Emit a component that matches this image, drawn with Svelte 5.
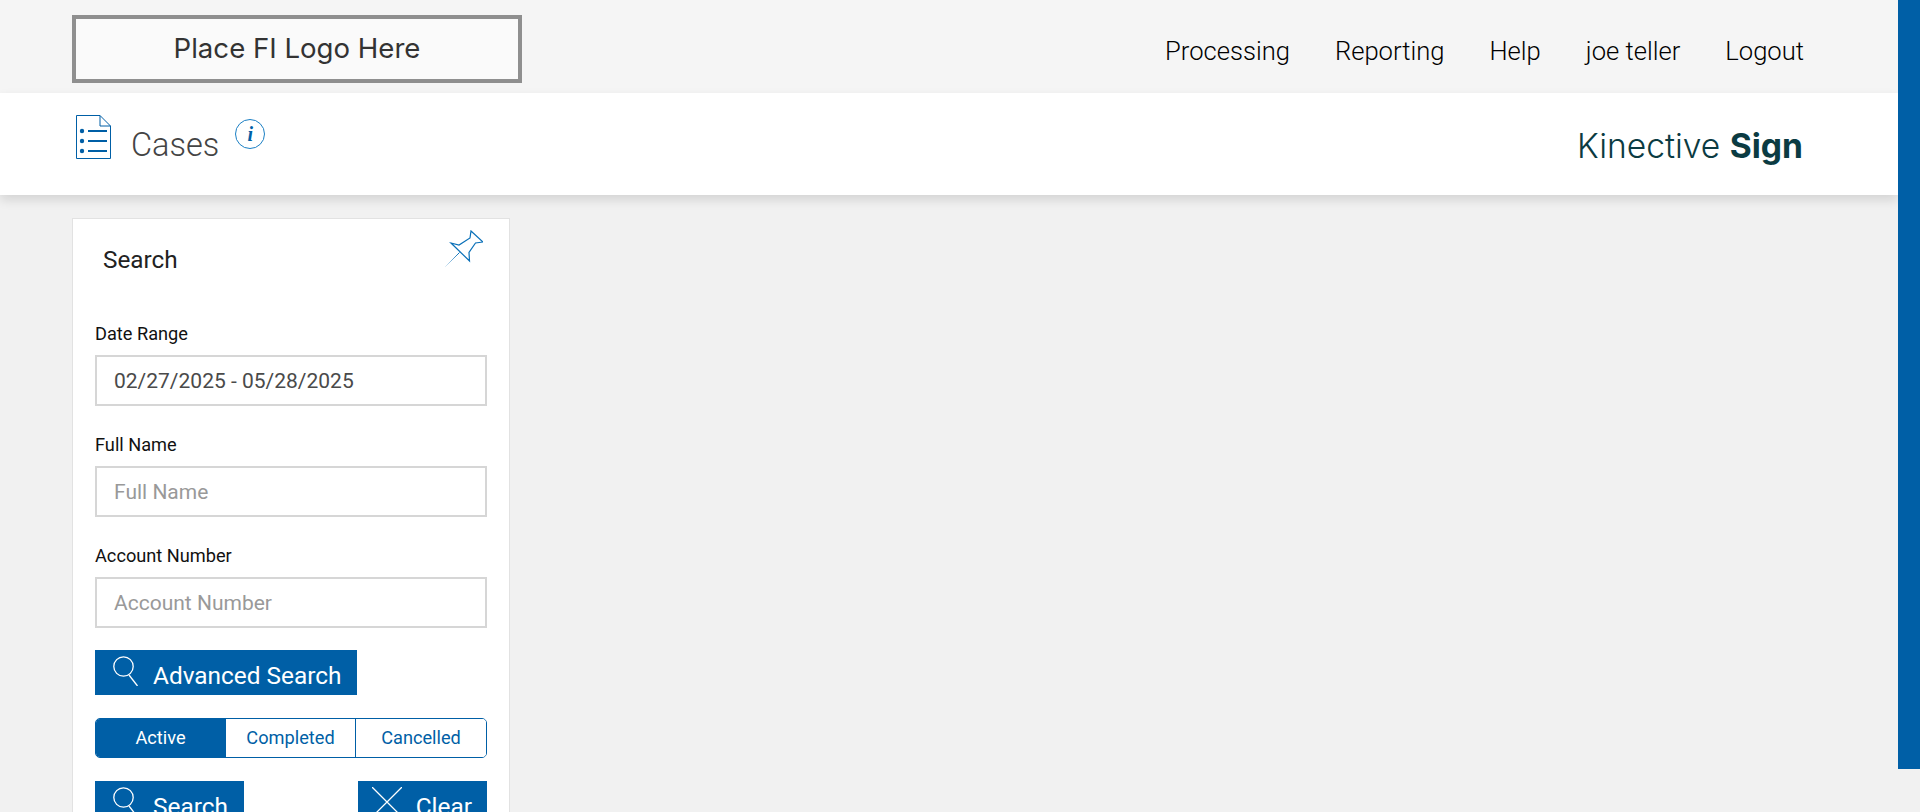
<script>
  // toggle state for the case status filter
  let status = $state('Active');
  const statuses = ['Active', 'Completed', 'Cancelled'];
  const navLinks = ['Processing', 'Reporting', 'Help', 'joe teller', 'Logout'];

  let dateRange = $state('02/27/2025 - 05/28/2025');
  let fullName = $state('');
  let accountNumber = $state('');
</script>

<div class="page">
  <div class="main">
    <header class="topbar">
      <div class="logo">Place FI Logo Here</div>
      <nav class="nav">
        {#each navLinks as link}
          <a href="#top">{link}</a>
        {/each}
      </nav>
    </header>

    <div class="titlebar">
      <div class="title">
        <svg class="doc-icon" viewBox="0 0 35 44" width="35" height="44" fill="none">
          <path d="M.5.5H24L34.5 11V43.5H.5Z" stroke="#005fa6" />
          <path d="M24 .5V11H34.5" stroke="#005fa6" />
          <g fill="#005fa6">
            <circle cx="6" cy="16" r="2.2" />
            <circle cx="6" cy="26" r="2.2" />
            <circle cx="6" cy="36" r="2.2" />
            <rect x="12" y="15" width="19" height="2" />
            <rect x="12" y="25" width="19" height="2" />
            <rect x="12" y="35" width="19" height="2" />
          </g>
        </svg>
        <h1>Cases</h1>
        <button class="info" aria-label="Info">i</button>
      </div>
      <div class="brand">Kinective <b>Sign</b></div>
    </div>

    <div class="content">
      <section class="card">
        <div class="card-head">
          <h2>Search</h2>
          <svg class="pin" viewBox="0 0 38 38" width="38" height="38" fill="none">
            <defs>
              <linearGradient id="needle" x1="14" y1="23" x2="0" y2="37" gradientUnits="userSpaceOnUse">
                <stop offset="0" stop-color="#0a70b8" />
                <stop offset="1" stop-color="#0a70b8" stop-opacity="0.1" />
              </linearGradient>
            </defs>
            <path d="M26 1L38 12 30.5 13 24 22.5 24.5 31 6 13 14 15 25 8Z" stroke="#0a70b8" stroke-width="1.2" />
            <path d="M14.5 22.5L0 37" stroke="url(#needle)" />
          </svg>
        </div>

        <div class="fields">
          <div>
            <label for="range">Date Range</label>
            <input id="range" type="text" bind:value={dateRange} />
          </div>
          <div>
            <label for="name">Full Name</label>
            <input id="name" type="text" placeholder="Full Name" bind:value={fullName} />
          </div>
          <div>
            <label for="account">Account Number</label>
            <input id="account" type="text" placeholder="Account Number" bind:value={accountNumber} />
          </div>
        </div>

        <button class="btn advanced">
          <svg viewBox="0 0 27 30" width="27" height="30" fill="none" stroke="#fff" stroke-width="1.3">
            <circle cx="10.5" cy="10.5" r="9.7" />
            <path d="M16 19L24.5 30" />
          </svg>
          Advanced Search
        </button>

        <div class="toggle">
          {#each statuses as s}
            <button class:on={status === s} onclick={() => (status = s)}>{s}</button>
          {/each}
        </div>

        <div class="actions">
          <button class="btn">
            <svg viewBox="0 0 27 30" width="27" height="30" fill="none" stroke="#fff" stroke-width="1.3">
              <circle cx="10.5" cy="10.5" r="9.7" />
              <path d="M16 19L24.5 30" />
            </svg>
            Search
          </button>
          <button class="btn clear">
            <svg viewBox="0 0 30 30" width="30" height="30" fill="none" stroke="#fff" stroke-width="1.3">
              <path d="M0 0L30 30M30 0L0 30" />
            </svg>
            Clear
          </button>
        </div>
      </section>
    </div>
  </div>
  <div class="rail"></div>
</div>

<style>
  :global(body) {
    background: #f1f1f1;
    overflow: hidden;
  }
  .page {
    display: flex;
    align-items: flex-start;
    height: 812px;
    overflow: hidden;
    font-family: Roboto, "Liberation Sans", sans-serif;
  }
  .main {
    flex: 1;
    min-width: 0;
  }
  .rail {
    width: 22px;
    height: 769px;
    flex: none;
    background: #005fa6;
    position: relative;
    z-index: 2;
  }

  .topbar {
    height: 93px;
    box-sizing: border-box;
    padding: 15px 94px 0 72px;
    background: #f5f5f5;
    display: flex;
    justify-content: space-between;
    align-items: flex-start;
  }
  .logo {
    width: 450px;
    height: 68px;
    box-sizing: border-box;
    padding-bottom: 3px;
    border: 4px solid #8f8f8f;
    background: #fafafa;
    color: #333;
    font-family: Inter, sans-serif;
    font-size: 27.6px;
    display: flex;
    align-items: center;
    justify-content: center;
  }
  .nav {
    display: flex;
    gap: 45px;
    padding-top: 20px;
  }
  .nav a {
    color: #000;
    font-weight: 300;
    font-size: 25.6px;
    line-height: 32px;
    text-decoration: none;
  }

  .titlebar {
    height: 102px;
    box-sizing: border-box;
    padding: 22px 95px 0 76px;
    background: #fff;
    box-shadow: 0 5px 10px rgba(0, 0, 0, 0.12);
    display: flex;
    justify-content: space-between;
    align-items: flex-start;
    position: relative;
  }
  .title {
    display: flex;
    align-items: flex-start;
  }
  .doc-icon {
    display: block;
  }
  h1 {
    margin: 10px 0 0 20px;
    font-size: 32.5px;
    line-height: 40px;
    font-weight: 300;
    color: #444;
  }
  .info {
    width: 30px;
    height: 30px;
    margin: 4px 0 0 16px;
    padding: 0;
    border: 1px solid #1b7fc4;
    border-radius: 50%;
    background: #fff;
    color: #005fa6;
    font: italic bold 20px "Liberation Serif", serif;
  }
  .brand {
    margin-top: 9px;
    font-family: Inter, sans-serif;
    font-weight: 300;
    font-size: 33.6px;
    line-height: 44px;
    color: #0b3b42;
  }
  .brand b {
    font-weight: 700;
  }

  .content {
    padding: 23px 0 0 72px;
  }
  .card {
    width: 438px;
    height: 700px;
    box-sizing: border-box;
    padding: 0 22px;
    background: #fff;
    border: 1px solid #e2e2e2;
  }
  .card-head {
    height: 104px;
    display: flex;
    justify-content: space-between;
    align-items: flex-start;
  }
  h2 {
    margin: 25px 0 0 8px;
    font-size: 24.3px;
    line-height: 32px;
    font-weight: 400;
    color: #222;
  }
  .pin {
    margin: 11px 4px 0 0;
  }
  .fields {
    display: flex;
    flex-direction: column;
    gap: 28px;
    margin-bottom: 22px;
  }
  label {
    display: block;
    font-size: 18.2px;
    line-height: 22px;
    margin-bottom: 10px;
    color: #111;
  }
  input {
    display: block;
    width: 100%;
    height: 51px;
    box-sizing: border-box;
    padding: 0 17px;
    border: 2px solid #d6d6d6;
    background: #fff;
    font-family: inherit;
    font-size: 21px;
    color: #4a4a4a;
    outline: none;
  }
  input::placeholder {
    color: #999;
  }
  .btn {
    display: flex;
    align-items: center;
    gap: 13px;
    height: 45px;
    box-sizing: border-box;
    padding: 5px 16px 0 18px;
    border: 0;
    background: #005fa6;
    color: #fff;
    font-family: inherit;
    font-size: 24.4px;
    white-space: nowrap;
  }
  .btn svg {
    flex: none;
    margin-top: -8px;
  }
  .advanced {
    width: 262px;
  }
  .toggle {
    display: grid;
    grid-template-columns: 129px 130px 1fr;
    height: 40px;
    margin-top: 23px;
    box-sizing: border-box;
    border: 1px solid #005fa6;
    border-radius: 5px;
    overflow: hidden;
  }
  .toggle button {
    border: 0;
    border-left: 1px solid #005fa6;
    background: #fff;
    color: #005fa6;
    padding: 0 0 2px;
    font-family: inherit;
    font-size: 18.2px;
  }
  .toggle button:first-child {
    border-left: 0;
  }
  .toggle button.on {
    background: #005fa6;
    color: #fff;
  }
  .actions {
    display: flex;
    justify-content: space-between;
    margin-top: 23px;
  }
  .clear {
    gap: 14px;
    padding-left: 14px;
    padding-right: 15px;
  }
</style>
